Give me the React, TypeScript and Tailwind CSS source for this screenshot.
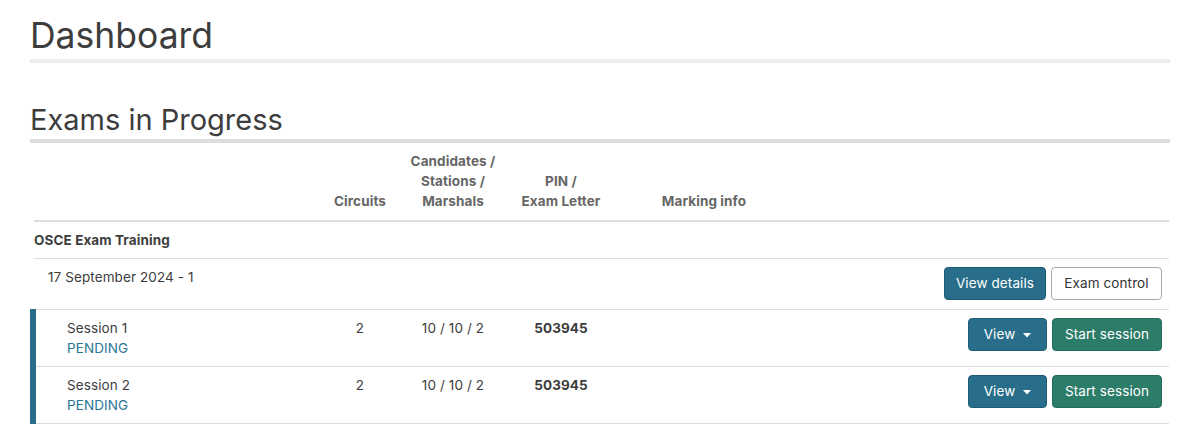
import * as React from "react"

const cols = "grid grid-cols-[286px_80px_106px_110px_176px_1fr]"

const sessions = [
  { name: "Session 1", status: "PENDING", circuits: "2", csm: "10 / 10 / 2", pin: "503945" },
  { name: "Session 2", status: "PENDING", circuits: "2", csm: "10 / 10 / 2", pin: "503945" },
]

const Caret = () => (
  <svg width="8" height="5" viewBox="0 0 8 5" className="ml-[8px] mt-[1px]">
    <path d="M0 0h8L4 4.5z" fill="currentColor" />
  </svg>
)

export default function App() {
  return (
    <div className="min-h-screen bg-white font-['Inter','Noto_Sans',sans-serif] text-[#444]">
      <div className="px-[30px] pt-[14px]">
        <h1 className="text-[35.5px] leading-[44px] font-normal text-[#3d3d3d]">Dashboard</h1>
        <div className="mt-[1px] h-[4px] w-[1140px] bg-[#eeeeee]" />

        <h2 className="mt-[39px] text-[29px] leading-[36px] font-normal text-[#3d3d3d]">Exams in Progress</h2>
        <div className="mt-[1px] h-[4px] w-[1140px] bg-[#dddddd]" />

        <div className="ml-[4px] w-[1135px] text-[13.5px] tracking-[0.1px]">
          {/* header */}
          <div className={`${cols} items-end border-b-2 border-[#dddddd] pb-[9px] pt-[8px] font-bold leading-[20px] text-[#666]`}>
            <div />
            <div className="text-center">Circuits</div>
            <div className="text-center">Candidates /<br />Stations /<br />Marshals</div>
            <div className="text-center">PIN /<br />Exam Letter</div>
            <div className="text-center">Marking info</div>
            <div />
          </div>

          <div className="h-[37px] border-b border-[#dddddd] flex items-center font-bold text-[#3d3d3d]">OSCE Exam Training</div>

          <div className="flex items-start justify-between border-b border-[#dddddd] h-[51px] pl-[14px] pr-[7px] pt-[8px]">
            <div className="leading-[20px] text-[#3d3d3d]">17 September 2024 - 1</div>
            <div className="flex gap-[5px]">
              <button className="h-[33px] w-[102px] rounded-[4px] border border-[#1f5b73] bg-[#286e8a] text-white">View details</button>
              <button className="h-[33px] w-[111px] rounded-[4px] border border-[#aaaaaa] bg-white text-[#333]">Exam control</button>
            </div>
          </div>

          {sessions.map((s) => (
            <div key={s.name} className={`${cols} relative h-[57px] border-b border-[#dddddd]`}>
              <div className="absolute -left-[4px] -top-[1px] h-[58px] w-[6px] bg-[#286e8a]" />
              <div className="pl-[33px] pt-[8px] leading-[20px]">
                <div className="text-[#3d3d3d]">{s.name}</div>
                <div className="text-[#2a7594]">{s.status}</div>
              </div>
              <div className="pt-[8px] leading-[20px] text-center text-[#3d3d3d]">{s.circuits}</div>
              <div className="pt-[8px] leading-[20px] text-center text-[#3d3d3d]">{s.csm}</div>
              <div className="pt-[8px] leading-[20px] text-center font-bold text-[#3d3d3d]">{s.pin}</div>
              <div />
              <div className="flex justify-end gap-[5px] pr-[7px] pt-[8px]">
                <button className="flex h-[33px] w-[79px] items-center justify-center rounded-[4px] border border-[#1f5b73] bg-[#286e8a] text-white">
                  View
                  <Caret />
                </button>
                <button className="h-[33px] w-[110px] rounded-[4px] border border-[#256b5b] bg-[#2c7c6a] text-white">Start session</button>
              </div>
            </div>
          ))}
        </div>
      </div>
    </div>
  )
}
